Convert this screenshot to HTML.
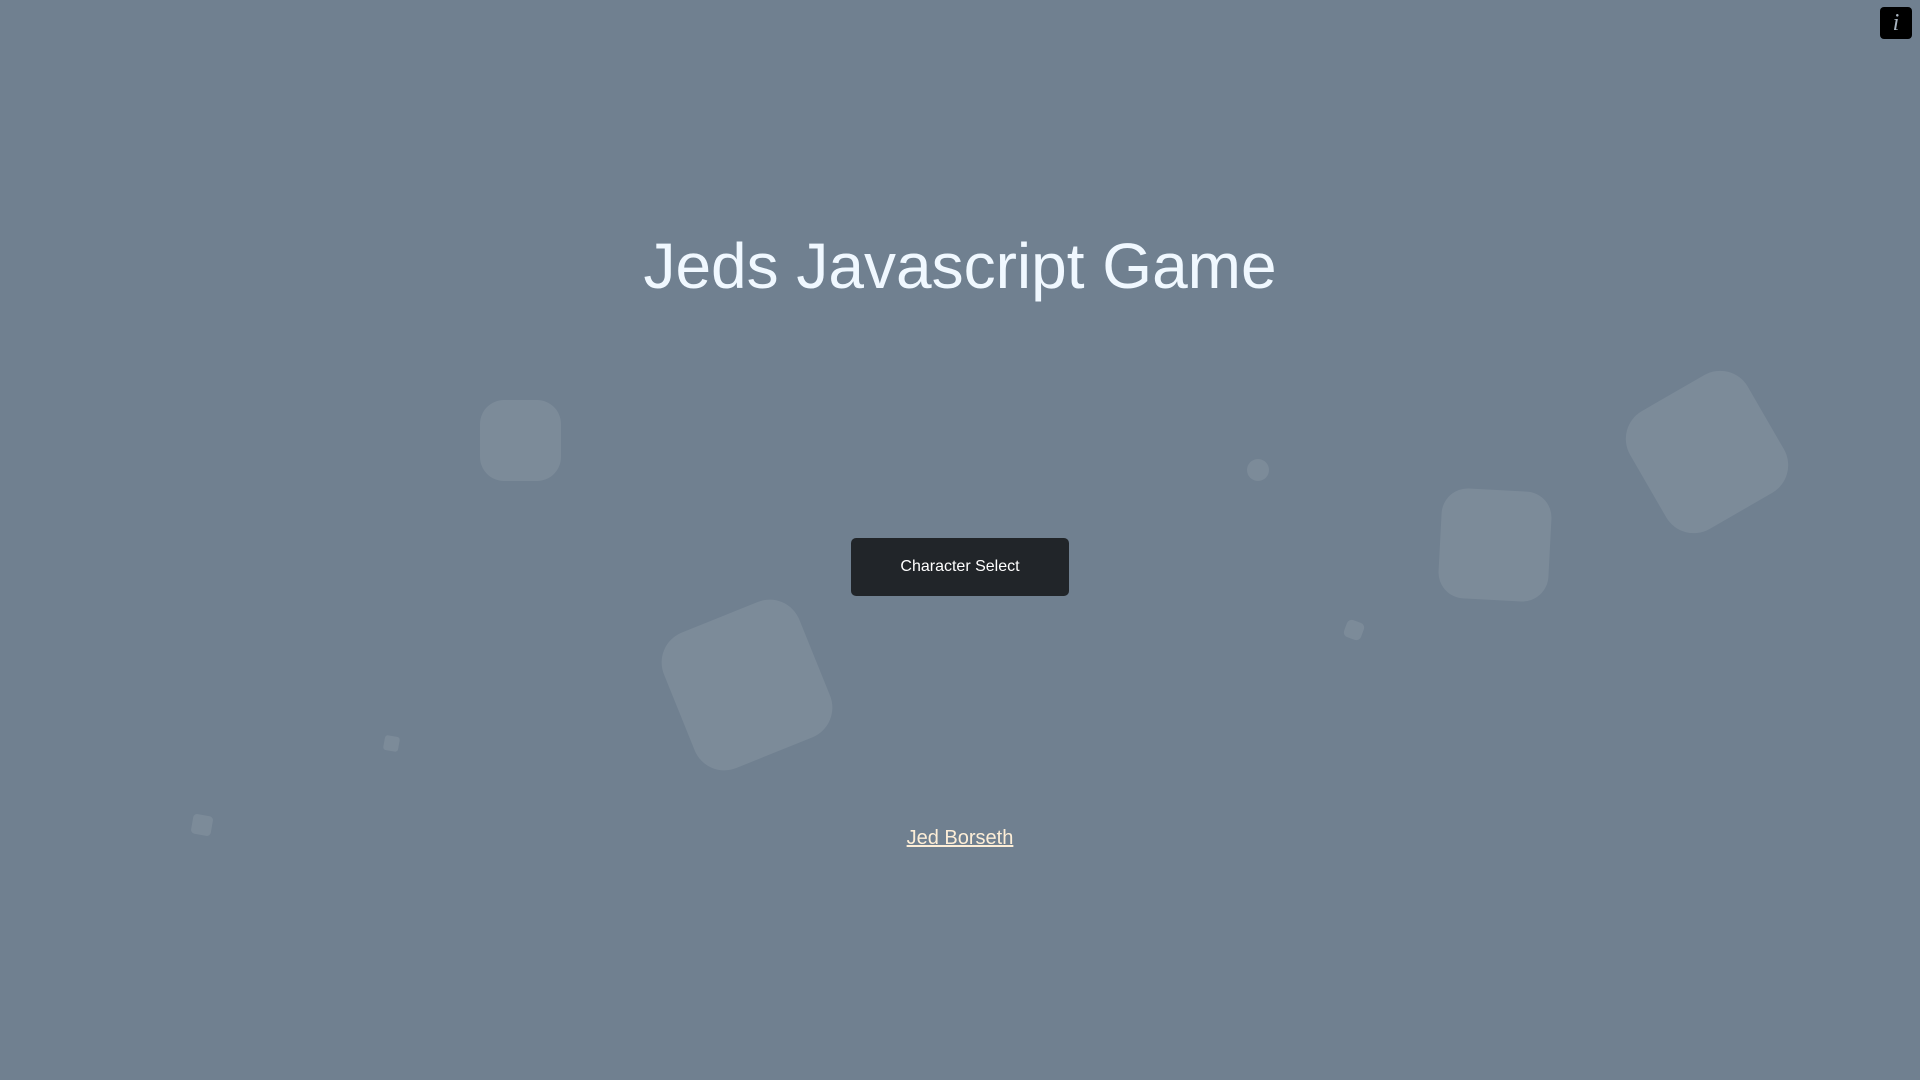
<!DOCTYPE html>
<html><head><meta charset="utf-8"><style>
html,body{margin:0;padding:0;width:1920px;height:1080px;overflow:hidden;background:#708090;font-family:"Liberation Sans",Arial,sans-serif;}
.sq{position:absolute;background:rgba(255,255,255,0.085);}
h1{position:absolute;left:0;width:1920px;top:234px;margin:0;text-align:center;font-weight:400;font-size:64px;line-height:1;color:#f0f8ff;}
.btn{position:absolute;left:851px;top:538px;width:218px;height:58px;background:#212529;border-radius:5px;color:#fff;font-size:16px;display:flex;align-items:center;justify-content:center;}
.link{position:absolute;left:0;width:1920px;text-align:center;top:827px;font-size:20px;color:#fdeed7;text-decoration:underline;}
.info{position:absolute;left:1880px;top:7px;width:32px;height:32px;background:#000;border-radius:4px;color:#a9b4c0;font-family:"Liberation Serif",serif;font-style:italic;font-size:24px;display:flex;align-items:center;justify-content:center;}
</style></head><body>
<div class="sq" style="left:480px;top:400px;width:81px;height:81px;border-radius:24px;"></div>
<div class="sq" style="left:1247px;top:459px;width:22px;height:22px;border-radius:50%;"></div>
<div class="sq" style="left:1639px;top:384px;width:136px;height:136px;border-radius:32px;transform:rotate(-30deg);"></div>
<div class="sq" style="left:1440px;top:490px;width:110px;height:110px;border-radius:26px;transform:rotate(3deg);"></div>
<div class="sq" style="left:1345px;top:621px;width:18px;height:18px;border-radius:5px;transform:rotate(20deg);"></div>
<div class="sq" style="left:674px;top:612px;width:146px;height:146px;border-radius:32px;transform:rotate(-22deg);"></div>
<div class="sq" style="left:384px;top:736px;width:15px;height:15px;border-radius:3px;transform:rotate(10deg);"></div>
<div class="sq" style="left:192px;top:815px;width:20px;height:20px;border-radius:4px;transform:rotate(10deg);"></div>
<h1>Jeds Javascript Game</h1>
<div class="btn">Character Select</div>
<div class="link">Jed Borseth</div>
<div class="info">i</div>
</body></html>
